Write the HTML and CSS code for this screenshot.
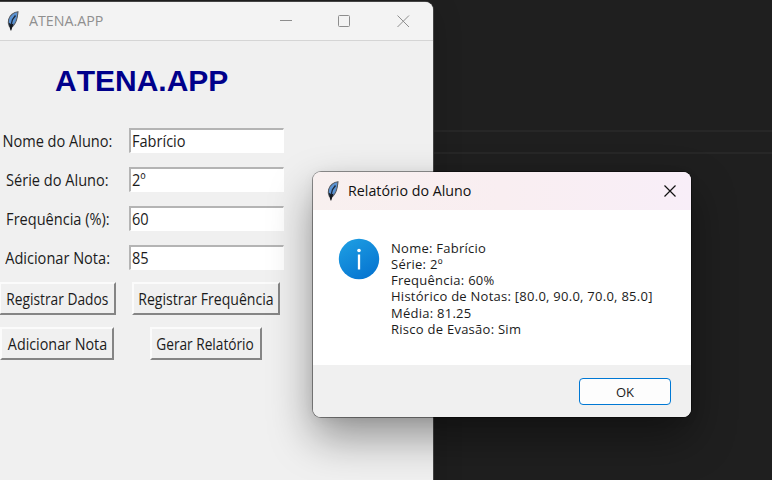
FILE: index.html
```html
<!DOCTYPE html>
<html lang="pt-BR">
<head>
<meta charset="utf-8">
<title>ATENA.APP</title>
<link rel="stylesheet" href="styles.css">
</head>
<body>
<div class="desktop">
  <div class="panel-lines"></div>
  <section class="window main">
    <header class="titlebar">
      <svg class="feather" viewBox="0 0 12 20"><path d="M11 .7C7 .8 2.500 4.500 1.600 8.500 1 11 1.300 13.500 2.300 15.200L5.500 15.500C8.500 13 10.500 7.500 11 .7Z" fill="#5b93d3" stroke="#55585d" stroke-width="1.100"/><path d="M8.500 4.500 5.500 8.500 4 14" fill="none" stroke="#1c2a3d" stroke-width="1.300"/><path d="M1.800 11.500 4 13.500 6.500 12.500 4.300 19.500H3.500L2.500 16Z" fill="#15191f"/></svg>
      <span class="caption">ATENA.APP</span>
      <svg class="controls" viewBox="0 0 132 14"><path d="M0 6.500H12M117.500 1.500 129 13M129 1.500 117.500 13" fill="none" stroke="#8d8d8d"/><rect x="58.500" y="1.500" width="11" height="11" rx="1" fill="none" stroke="#8d8d8d"/></svg>
    </header>
    <h1>ATENA.APP</h1>
    <form class="fields">
      <label><span class="t">Nome do Aluno:</span></label><div class="entry"><span class="t">Fabrício</span></div>
      <label><span class="t">Série do Aluno:</span></label><div class="entry"><span class="t">2º</span></div>
      <label><span class="t">Frequência (%):</span></label><div class="entry"><span class="t">60</span></div>
      <label><span class="t">Adicionar Nota:</span></label><div class="entry"><span class="t">85</span></div>
    </form>
    <div class="actions">
      <button class="b1"><span class="t">Registrar Dados</span></button><button class="b2"><span class="t">Registrar Frequência</span></button>
      <button class="b3"><span class="t">Adicionar Nota</span></button><button class="b4"><span class="t">Gerar Relatório</span></button>
    </div>
  </section>
  <section class="window dialog">
    <header class="titlebar">
      <svg class="feather" viewBox="0 0 12 20"><path d="M11 .7C7 .8 2.500 4.500 1.600 8.500 1 11 1.300 13.500 2.300 15.200L5.500 15.500C8.500 13 10.500 7.500 11 .7Z" fill="#5b93d3" stroke="#55585d" stroke-width="1.100"/><path d="M8.500 4.500 5.500 8.500 4 14" fill="none" stroke="#1c2a3d" stroke-width="1.300"/><path d="M1.800 11.500 4 13.500 6.500 12.500 4.300 19.500H3.500L2.500 16Z" fill="#15191f"/></svg>
      <span class="caption">Relatório do Aluno</span>
      <svg class="close" viewBox="0 0 14 14"><path d="M1.500 1.500 12.500 12.500M12.500 1.500 1.500 12.500" stroke="#111" stroke-width="1.200"/></svg>
    </header>
    <div class="content">
      <svg class="info" viewBox="0 0 42 42"><defs><linearGradient id="blue" x1=".2" y1="0" x2=".8" y2="1"><stop stop-color="#1d9de2"/><stop offset="1" stop-color="#0573d0"/></linearGradient></defs><circle cx="21" cy="21" r="20.200" fill="url(#blue)"/><circle cx="21" cy="12.500" r="1.800" fill="#fff"/><path d="M21 16.500V31.500" stroke="#fff" stroke-width="2.300"/></svg>
      <div class="report">
        <p>Nome: Fabrício</p>
        <p>Série: 2º</p>
        <p>Frequência: 60%</p>
        <p>Histórico de Notas: [80.0, 90.0, 70.0, 85.0]</p>
        <p>Média: 81.25</p>
        <p>Risco de Evasão: Sim</p>
      </div>
    </div>
    <footer><button class="ok">OK</button></footer>
  </section>
</div>
</body>
</html>
```
FILE: styles.css
```css
* { box-sizing: border-box; }
body { margin: 0; font-family: "Open Sans", sans-serif; color: #1b1b1b; }
h1, p { margin: 0; }
button { font: inherit; color: inherit; padding: 0; white-space: nowrap; }
.desktop { position: relative; width: 772px; height: 480px; overflow: hidden; background: #1f1f1f; }
.panel-lines { height: 24px; border: solid #272727; border-width: 2px 0; position: absolute; top: 130px; left: 0; right: 0; }
.window { position: absolute; display: flex; flex-direction: column; overflow: hidden; }
.main { left: -10px; top: 2px; width: 443px; height: 500px; padding-left: 10px; border-radius: 8px; background: #f0f0f0; box-shadow: 0 0 0 1px #444, 0 8px 30px #0003; }
.titlebar { display: flex; align-items: center; flex: none; }
.main .titlebar { height: 39px; background: #f3f3f3; border-bottom: 1px solid #d5d5d5; margin-left: -10px; padding-left: 17px; }
.feather { width: 12px; height: 20px; flex: none; }
.caption { display: block; font-size: 15px; line-height: 20px; margin-bottom: 2px; white-space: nowrap; transform: scaleX(.95); transform-origin: left; }
.main .caption { margin-left: 10px; color: #8f8f8f; }
.controls { width: 132px; height: 14px; margin-left: auto; margin-right: 21px; }
h1 { font: bold 30px/36px "Liberation Sans", sans-serif; font-kerning: none; color: #00008b; width: 173px; margin: 22px 0 0 55px; white-space: nowrap; }
.fields { display: grid; grid-template-columns: 116px 155px; column-gap: 13px; grid-auto-rows: 39px; margin-top: 22px; font-size: 16px; }
.fields label { display: flex; justify-content: center; align-items: center; white-space: nowrap; padding-right: 1px; }
.entry { height: 25px; align-self: center; background: #fff; border: solid; border-width: 2px 1px 1px 2px; border-color: #b4b4b4 #fff #fff #b4b4b4; padding-left: 1px; line-height: 23px; }
.t { display: inline-block; transform: scaleX(.91); }
.entry .t { transform-origin: left; }
.actions { display: grid; grid-template-columns: 116px 181px; grid-template-rows: 33px 33px; row-gap: 12px; justify-items: center; margin: 5px 0 0 -1px; font-size: 16px; }
.actions button { height: 33px; background: #f0f0f0; border: solid; border-width: 2px; border-color: #fbfbfb #858585 #858585 #fbfbfb; display: flex; align-items: center; justify-content: center; line-height: 22px; }
.actions .t { margin: 0 -10px; }
.b1 { width: 117px; }
.b1 .t { transform: scaleX(.86); }
.b2 { width: 148px; margin-left: 1px; }
.b2 .t { transform: scaleX(.88); }
.b3 { width: 114px; }
.b3 .t { transform: scaleX(.895); }
.b4 { width: 112px; }
.b4 .t { transform: scaleX(.855); }
.dialog { left: 313px; top: 172px; width: 378px; height: 245px; border-radius: 8px; background: #fff; box-shadow: 0 0 0 1px #0006, 0 20px 44px #0006, 0 2px 12px #0001; }
.dialog .titlebar { height: 38px; padding: 0 14px; background: linear-gradient(90deg, #f8f0ef, #f9eef1 50%, #f8eef8); }
.dialog .caption { margin-left: 9px; color: #111; }
.close { width: 14px; height: 14px; margin-left: auto; }
.content { flex: 1; display: flex; padding: 28px 0 0 25px; }
.info { width: 42px; height: 42px; flex: none; }
.report { margin: 1.500px 0 0 11px; font-size: 13px; line-height: 16.300px; letter-spacing: .26px; white-space: nowrap; }
.dialog footer { height: 52px; background: #f0f0f0; display: flex; justify-content: flex-end; padding: 13px 20px 0 0; }
.ok { width: 92px; height: 27px; border: 1px solid #0078d4; border-radius: 4px; background: #fdfdfd; font-size: 13px; line-height: 24px; }
```
